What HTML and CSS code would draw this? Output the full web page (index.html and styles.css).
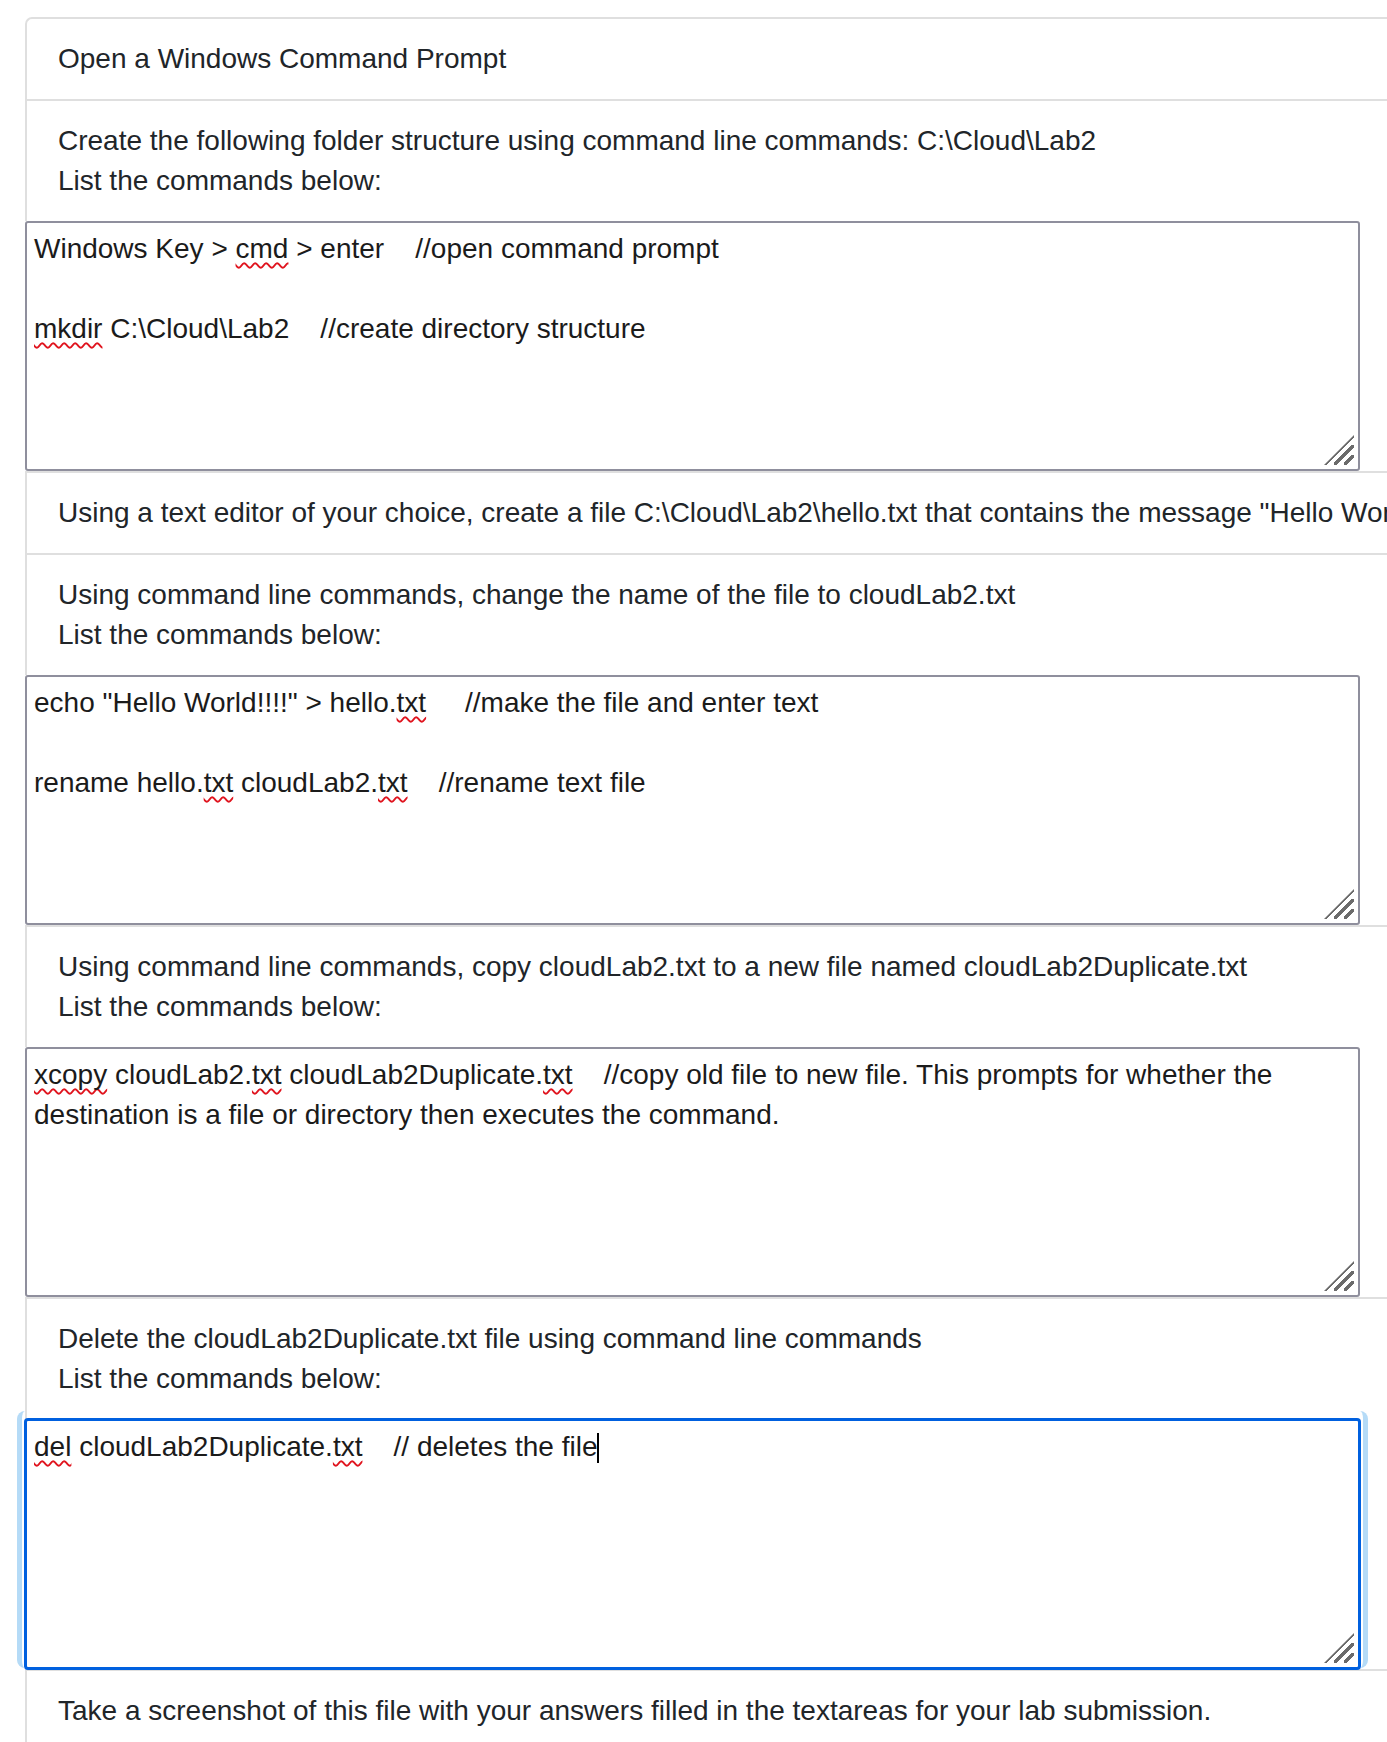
FILE: index.html
```html
<!DOCTYPE html>
<html lang="en">
<head>
<meta charset="utf-8">
<title>Lab 2</title>
<link rel="stylesheet" href="styles.css">
</head>
<body>
<div class="list">
  <div class="item first">Open a Windows Command Prompt</div>
  <div class="item">Create the following folder structure using command line commands: C:\Cloud\Lab2<br>List the commands below:</div>
  <div class="answer">Windows Key &gt; <span class="sp">cmd</span> &gt; enter    //open command prompt

<span class="sp">mkdir</span> C:\Cloud\Lab2    //create directory structure<span class="grip"></span></div>
  <div class="item">Using a text editor of your choice, create a file C:\Cloud\Lab2\hello.txt that contains the message "Hello World!!!!"</div>
  <div class="item">Using command line commands, change the name of the file to cloudLab2.txt<br>List the commands below:</div>
  <div class="answer">echo "Hello World!!!!" &gt; hello.<span class="sp">txt</span>     //make the file and enter text

rename hello.<span class="sp">txt</span> cloudLab2.<span class="sp">txt</span>    //rename text file<span class="grip"></span></div>
  <div class="item">Using command line commands, copy cloudLab2.txt to a new file named cloudLab2Duplicate.txt<br>List the commands below:</div>
  <div class="answer"><span class="sp">xcopy</span> cloudLab2.<span class="sp">txt</span> cloudLab2Duplicate.<span class="sp">txt</span>    //copy old file to new file. This prompts for whether the
destination is a file or directory then executes the command.<span class="grip"></span></div>
  <div class="item">Delete the cloudLab2Duplicate.txt file using command line commands<br>List the commands below:</div>
  <div class="answer focus"><span class="sp">del</span> cloudLab2Duplicate.<span class="sp">txt</span>    // deletes the file<span class="caret"></span><span class="grip"></span></div>
  <div class="item">Take a screenshot of this file with your answers filled in the textareas for your lab submission.</div>
</div>
</body>
</html>
```
FILE: styles.css
```css
html, body {
  margin: 0;
  padding: 0;
  overflow: hidden;
  background: #ffffff;
}

body {
  font-family: "Liberation Sans", Arial, sans-serif;
  font-size: 28px;
  line-height: 40px;
  color: #212529;
}

.list {
  margin: 17px 0 0 25px;
  width: 1600px;
  display: flex;
  flex-direction: column;
}

.item {
  border: 2px solid #dfdfdf;
  border-bottom: 0;
  border-right: 0;
  padding: 20px 0 20px 31px;
  white-space: nowrap;
}

.item.first {
  border-top-left-radius: 7px;
}

.answer {
  position: relative;
  width: 1335px;
  height: 250px;
  box-sizing: border-box;
  border: 2px solid #8f8f9d;
  border-radius: 3px;
  padding: 6px 7px;
  white-space: pre-wrap;
  color: #1b1b1b;
  background: #ffffff;
}

.answer.focus {
  border-color: #0060df;
  box-shadow: 0 0 0 1px #0060df;
}

.answer.focus::before {
  content: "";
  position: absolute;
  left: -10px;
  right: -10px;
  top: -10px;
  bottom: -1px;
  border-left: 5px solid #b5dbf7;
  border-right: 5px solid #b5dbf7;
  border-radius: 8px;
}

.sp {
  text-decoration: underline wavy #e0141e;
  text-decoration-thickness: 1.5px;
  text-underline-offset: 4px;
  text-decoration-skip-ink: none;
}

.caret {
  display: inline-block;
  width: 0;
  height: 30px;
  border-left: 2px solid #000;
  vertical-align: -7px;
}

.grip {
  position: absolute;
  right: 4px;
  bottom: 4px;
  width: 30px;
  height: 30px;
  background:
    linear-gradient(135deg, transparent 0 calc(50% - 1.5px), #6b6b6b calc(50% - 1.5px) calc(50% + 1.5px), transparent calc(50% + 1.5px)) 0 0 / 30px 30px no-repeat,
    linear-gradient(135deg, transparent 0 calc(50% - 1.5px), #6b6b6b calc(50% - 1.5px) calc(50% + 1.5px), transparent calc(50% + 1.5px)) 10px 10px / 20px 20px no-repeat,
    linear-gradient(135deg, transparent 0 calc(50% - 1.5px), #6b6b6b calc(50% - 1.5px) calc(50% + 1.5px), transparent calc(50% + 1.5px)) 20px 20px / 10px 10px no-repeat;
  clip-path: polygon(100% 0, 100% 100%, 0 100%);
}
```
